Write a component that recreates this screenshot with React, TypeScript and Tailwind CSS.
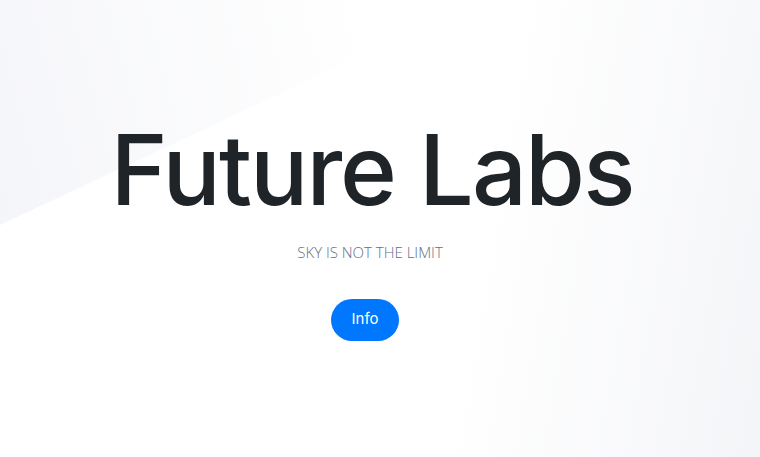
export default function App() {
  return (
    <main className="relative h-[457px] w-full overflow-hidden bg-[linear-gradient(100deg,#ffffff_62%,#f4f5f8_100%)] font-['Inter',sans-serif]">
      {/* soft triangle top-left */}
      <div className="absolute inset-0 bg-[linear-gradient(75deg,#f3f4f8_0%,#ffffff_55%)] [clip-path:polygon(0_0,480px_0,0_225px)]" />
      <div className="relative flex flex-col items-center pr-5 pt-[121px]">
        <h1 className="ml-1 text-[97px] font-medium leading-none tracking-[-0.02em] text-[#1f2429]">
          Future Labs
        </h1>
        <p className="mt-[23px] font-['Open_Sans',sans-serif] text-[15px] font-light uppercase text-[#5f6f86]">
          Sky is not the limit
        </p>
        <button
          type="button"
          className="mr-[10px] mt-[35px] h-[42px] w-[68px] rounded-full bg-[#0077ff] text-[15px] font-normal text-white"
        >
          Info
        </button>
      </div>
    </main>
  );
}
